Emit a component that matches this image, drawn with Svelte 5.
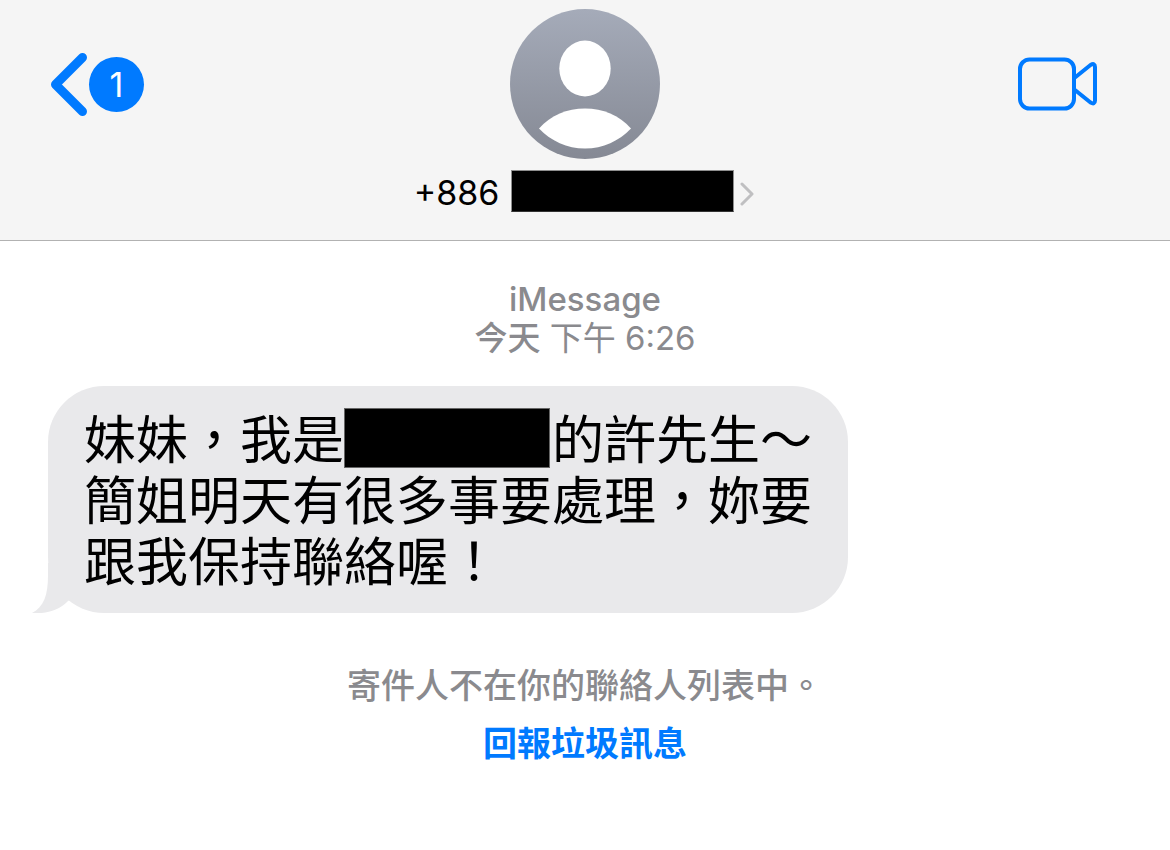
<script lang="ts">
  type Part = { text?: string; redacted?: boolean };

  const unread = 1;
  const countryCode = '+886';

  const lines: Part[][] = [
    [{ text: '妹妹，我是' }, { redacted: true }, { text: '的許先生～' }],
    [{ text: '簡姐明天有很多事要處理，妳要' }],
    [{ text: '跟我保持聯絡喔！' }],
  ];
</script>

<div class="chat">
  <header class="header">
    <div class="nav">
      <button class="nav-button back" type="button" aria-label="返回">
        <svg class="back-chevron" viewBox="0 0 38 64" fill="none" stroke="currentColor">
          <path d="M32.500 5.500 5.500 32.500 32.500 59.500" stroke-width="9" stroke-linecap="round" stroke-linejoin="round" />
        </svg>
        <span class="unread">{unread}</span>
      </button>

      <svg class="avatar" viewBox="0 0 150 150" aria-hidden="true">
        <defs>
          <linearGradient id="avatar-fill" x1="0" y1="0" x2="0" y2="1">
            <stop offset="0" stop-color="#a5abb9" />
            <stop offset="1" stop-color="#858994" />
          </linearGradient>
        </defs>
        <circle cx="75" cy="75" r="75" fill="url(#avatar-fill)" />
        <ellipse cx="75" cy="59.5" rx="25.7" ry="28" fill="#fff" />
        <path d="M29 119.500C41 106 57 99.500 75 99.500S109 106 121 119.500C109 132 93 139.500 75 139.500S41 132 29 119.500Z" fill="#fff" />
      </svg>

      <button class="nav-button video" type="button" aria-label="視訊">
        <svg class="video-icon" viewBox="0 0 80 54" fill="none" stroke="currentColor" stroke-width="4">
          <rect x="2" y="2.500" width="54" height="49" rx="9.500" />
          <path d="M57 20.500 72.500 8Q77 5.500 77 10V43.500Q77 48 72.500 45.500L57 33" stroke-linejoin="round" />
        </svg>
      </button>
    </div>

    <button class="contact" type="button">
      <span class="phone">{countryCode}</span>
      <span class="phone-redacted"></span>
      <svg class="contact-chevron" viewBox="0 0 14 24" fill="none" stroke="currentColor">
        <path d="M2 2 12 12 2 22" stroke-width="3" stroke-linecap="round" stroke-linejoin="round" />
      </svg>
    </button>
  </header>

  <main class="thread">
    <div class="timestamp">
      <div class="service">iMessage</div>
      <div><span class="day">今天</span> 下午 6:26</div>
    </div>

    <div class="bubble">
      <svg class="tail" viewBox="0 0 50 50" aria-hidden="true">
        <path d="M16 0V12C16 32 12 44 0 50C14 51 26 48 36 38L50 30V0Z" fill="#e9e9eb" />
      </svg>
      {#each lines as line}
        <p class="line">{#each line as part}{#if part.redacted}<span class="redacted"></span>{:else}{part.text}{/if}{/each}</p>
      {/each}
    </div>

    <footer class="notice">
      <p class="notice-text">寄件人不在你的聯絡人列表中。</p>
      <a class="report" href="#report">回報垃圾訊息</a>
    </footer>
  </main>
</div>

<style>
  :global(body) {
    background: #fff;
    margin: 0;
  }

  .chat {
    color: #000;
    font-family: Inter, 'Noto Sans CJK TC', sans-serif;
  }

  .header {
    align-items: center;
    background: #f5f5f5;
    border-bottom: 1px solid #b2b2b2;
    display: flex;
    flex-direction: column;
    gap: 11px;
    padding: 9px 0 28px;
  }

  .nav {
    align-items: center;
    box-sizing: border-box;
    display: grid;
    grid-template-columns: 1fr auto 1fr;
    padding: 0 50px;
    width: 100%;
  }

  .nav-button,
  .contact {
    align-items: center;
    background: none;
    border: 0;
    cursor: pointer;
    display: flex;
    font: inherit;
    padding: 0;
  }

  .nav-button {
    color: #007aff;
  }

  .back {
    gap: 1px;
    justify-self: start;
  }

  .back-chevron {
    height: 64px;
    width: 38px;
  }

  .unread {
    background: #007aff;
    border-radius: 50%;
    color: #fff;
    font-size: 34px;
    height: 55px;
    line-height: 55px;
    text-align: center;
    width: 55px;
  }

  .avatar {
    display: block;
    height: 150px;
    width: 150px;
  }

  .video {
    justify-self: end;
    padding-right: 22px;
  }

  .video-icon {
    height: 54px;
    width: 80px;
  }

  .contact {
    color: #000;
    height: 42px;
    padding-right: 2px;
  }

  .phone {
    font-size: 34px;
    line-height: 42px;
    margin-right: 12px;
    padding-top: 4px;
  }

  .phone-redacted {
    background: #000;
    border: 1px solid #8e8e8e;
    border-bottom-color: #333;
    box-sizing: border-box;
    height: 42px;
    margin-right: 6px;
    width: 223px;
  }

  .contact-chevron {
    color: #bfbfc1;
    height: 24px;
    margin-top: 6px;
    width: 14px;
  }

  .thread {
    display: flex;
    flex-direction: column;
    padding: 39px 48px;
  }

  .timestamp {
    color: #8a8a8e;
    font-size: 33px;
    line-height: 39px;
    text-align: center;
  }

  .service,
  .day {
    font-weight: 500;
  }

  .bubble {
    align-self: flex-start;
    background: #e9e9eb;
    border-radius: 56px;
    margin-top: 28px;
    padding: 24px 36px 20px;
    position: relative;
  }

  .tail {
    bottom: 0;
    height: 50px;
    left: -16px;
    position: absolute;
    width: 50px;
  }

  .line {
    font-size: 52px;
    line-height: 61px;
    margin: 0;
    position: relative;
  }

  .redacted {
    background: #000;
    border: 1px solid #666;
    box-sizing: border-box;
    display: inline-block;
    height: 60px;
    margin: -2px 2px 0 0;
    vertical-align: top;
    width: 206px;
  }

  .notice {
    align-items: center;
    display: flex;
    flex-direction: column;
    font-size: 34px;
    font-weight: 500;
    gap: 18px;
    line-height: 40px;
    margin-top: 53px;
  }

  .notice-text {
    color: #8a8a8e;
    margin: 0;
  }

  .report {
    color: #007aff;
    font-weight: 700;
    text-decoration: none;
  }
</style>
